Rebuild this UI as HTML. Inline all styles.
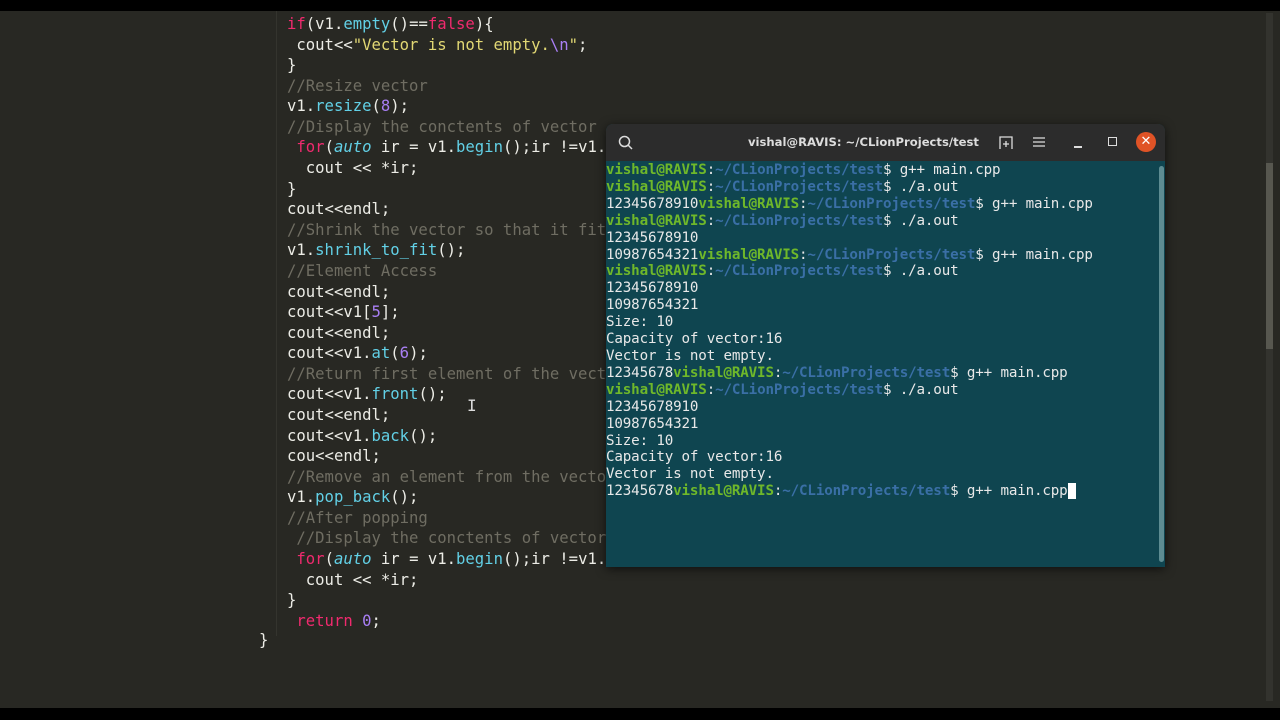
<!DOCTYPE html>
<html><head><meta charset="utf-8"><style>
body{margin:0;width:1280px;height:720px;background:#000;overflow:hidden;position:relative;font-family:"DejaVu Sans Mono","Liberation Mono",monospace}
#ed{position:absolute;left:0;top:11px;width:1280px;height:697px;background:#282823}
pre{margin:0;position:absolute;left:287px;top:3px;font-size:15.6px;line-height:20.58px;color:#ecece6;font-family:"DejaVu Sans Mono",monospace}
.k{color:#f02a6e}.f{color:#62d0e6}.s{color:#e2d874}.n{color:#a97ff5}.c{color:#6f6d62}.i{font-style:italic;color:#62d0e6}
#sb{position:absolute;left:1266px;top:2px;width:7px;height:688px;background:#33332e}
#th{position:absolute;left:1266px;top:152px;width:7px;height:186px;background:#57574f}
#term{position:absolute;left:606px;top:124px;width:559px;height:443px;background:#0f4550;box-shadow:0 2px 10px rgba(0,0,0,.6);border-radius:7px 7px 0 0;overflow:hidden}
#tb{height:37px;background:#2c2c2c;color:#ddd;font-family:"DejaVu Sans","Liberation Sans",sans-serif;font-size:11.6px;position:relative}
#tt{position:absolute;left:142px;top:11px;font-weight:bold}
#tx{position:absolute;left:0;top:38px;font-size:14.2px;line-height:16.9px;color:#e8e8e8;white-space:pre;font-family:"DejaVu Sans Mono",monospace;letter-spacing:-0.15px}
.g{color:#6fb82a;font-weight:bold}.b{color:#3a6fa6;font-weight:bold}
#vs{position:absolute;left:553px;top:42px;width:5px;height:396px;background:#5d8c92;border-radius:3px}
</style></head><body>
<div id="ed">
<pre><span class="k">if</span>(v1.<span class="f">empty</span>()==<span class="k">false</span>){
 cout&lt;&lt;<span class="s">"Vector is not empty.</span><span class="n">\n</span><span class="s">"</span>;
}
<span class="c">//Resize vector</span>
v1.<span class="f">resize</span>(<span class="n">8</span>);
<span class="c">//Display the conctents of vector</span>
 <span class="k">for</span>(<span class="i">auto</span> ir = v1.<span class="f">begin</span>();ir !=v1.<span class="f">end</span>();++ir){
  cout &lt;&lt; *ir;
}
cout&lt;&lt;endl;
<span class="c">//Shrink the vector so that it fits</span>
v1.<span class="f">shrink_to_fit</span>();
<span class="c">//Element Access</span>
cout&lt;&lt;endl;
cout&lt;&lt;v1[<span class="n">5</span>];
cout&lt;&lt;endl;
cout&lt;&lt;v1.<span class="f">at</span>(<span class="n">6</span>);
<span class="c">//Return first element of the vector</span>
cout&lt;&lt;v1.<span class="f">front</span>();
cout&lt;&lt;endl;
cout&lt;&lt;v1.<span class="f">back</span>();
cou&lt;&lt;endl;
<span class="c">//Remove an element from the vector</span>
v1.<span class="f">pop_back</span>();
<span class="c">//After popping</span>
 <span class="c">//Display the conctents of vector</span>
 <span class="k">for</span>(<span class="i">auto</span> ir = v1.<span class="f">begin</span>();ir !=v1.<span class="f">end</span>();++ir){
  cout &lt;&lt; *ir;
}
 <span class="k">return</span> <span class="n">0</span>;
</pre>
<div style="position:absolute;left:259px;top:620px;font-size:15.6px;color:#ecece6">}</div>
<div style="position:absolute;left:276px;top:0;width:1px;height:625px;background:#34342e"></div>
<div id="sb"></div><div id="th"></div>
<div style="position:absolute;left:467px;top:385px;color:#ddd;font-size:16px">I</div>
</div>
<div id="term">
<div id="tb">
<svg style="position:absolute;left:12px;top:11px" width="16" height="16"><circle cx="6.5" cy="6.5" r="5" fill="none" stroke="#ddd" stroke-width="1.5"/><line x1="10" y1="10" x2="14" y2="14" stroke="#ddd" stroke-width="1.5"/></svg>
<span id="tt">vishal@RAVIS: ~/CLionProjects/test</span>
<svg style="position:absolute;left:393px;top:12px" width="14" height="14"><path d="M1 13V1h12v12M7 5v6M4 8h6" fill="none" stroke="#ddd" stroke-width="1.3"/></svg>
<svg style="position:absolute;left:427px;top:12px" width="12" height="12"><path d="M0 2h12M0 6h12M0 10h12" stroke="#ddd" stroke-width="1.3"/></svg>
<div style="position:absolute;left:468px;top:22px;width:8px;height:1.5px;background:#ddd"></div>
<div style="position:absolute;left:502px;top:13px;width:7px;height:7px;border:1.5px solid #ddd"></div>
<div style="position:absolute;left:530px;top:8px;width:20px;height:20px;border-radius:50%;background:#e05326;color:#fff;font-size:13px;text-align:center;line-height:20px">✕</div>
</div>
<div id="tx"><span class="g">vishal@RAVIS</span>:<span class="b">~/CLionProjects/test</span>$ g++ main.cpp
<span class="g">vishal@RAVIS</span>:<span class="b">~/CLionProjects/test</span>$ ./a.out
12345678910<span class="g">vishal@RAVIS</span>:<span class="b">~/CLionProjects/test</span>$ g++ main.cpp
<span class="g">vishal@RAVIS</span>:<span class="b">~/CLionProjects/test</span>$ ./a.out
12345678910
10987654321<span class="g">vishal@RAVIS</span>:<span class="b">~/CLionProjects/test</span>$ g++ main.cpp
<span class="g">vishal@RAVIS</span>:<span class="b">~/CLionProjects/test</span>$ ./a.out
12345678910
10987654321
Size: 10
Capacity of vector:16
Vector is not empty.
12345678<span class="g">vishal@RAVIS</span>:<span class="b">~/CLionProjects/test</span>$ g++ main.cpp
<span class="g">vishal@RAVIS</span>:<span class="b">~/CLionProjects/test</span>$ ./a.out
12345678910
10987654321
Size: 10
Capacity of vector:16
Vector is not empty.
12345678<span class="g">vishal@RAVIS</span>:<span class="b">~/CLionProjects/test</span>$ g++ main.cpp<span style="background:#fff">&nbsp;</span></div>
<div id="vs"></div>
</div>
</body></html>
